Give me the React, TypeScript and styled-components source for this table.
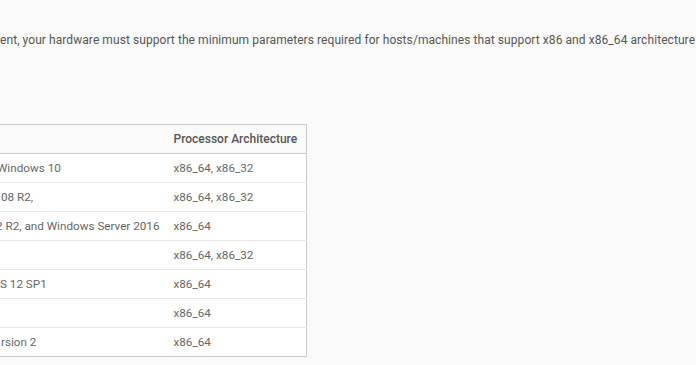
import { createGlobalStyle, styled } from "styled-components";

const GlobalStyle = createGlobalStyle`
  body {
    margin: 0;
    background-color: #fafafa;
    font-family: "Roboto", "Open Sans", sans-serif;
    color: #565656;
  }
`;

const Page = styled.main`
  width: 696px;
  height: 365px;
  overflow: hidden;
  display: flex;
  flex-direction: column;
`;

const Intro = styled.p`
  margin: 0;
  padding-top: 31px;
  font-size: 12px;
  letter-spacing: 0.07px;
  line-height: 18px;
  white-space: nowrap;
  color: #565656;
`;

const TableWrap = styled.div`
  margin-top: 75px;
  overflow: hidden;
`;

const Table = styled.table`
  border-collapse: collapse;
  table-layout: fixed;
  width: 308px;
  margin-left: -1px;
  background-color: #fff;
  border: 1px solid #ccc;
  font-size: 11.7px;
`;

const HeadCell = styled.th<{ $width?: number }>`
  box-sizing: border-box;
  width: ${({ $width }) => ($width ? `${$width}px` : "auto")};
  height: 29px;
  padding: 0 12px;
  text-align: left;
  font-weight: 500;
  font-size: 12px;
  color: #565656;
  background-color: #fafafa;
  border-bottom: 1px solid #ccc;
  white-space: nowrap;

  &:first-child {
    padding-left: 0;
  }
`;

const Row = styled.tr`
  & + & td {
    border-top: 1px solid #e8e8e8;
  }
`;

const Cell = styled.td<{ $indent?: number }>`
  box-sizing: border-box;
  height: 29px;
  padding: 0 12px;
  white-space: nowrap;
  overflow: hidden;
  color: #666;
  text-indent: ${({ $indent }) => $indent ?? 0}px;

  &:first-child {
    padding-left: 0;
  }
`;

const rows = [
  { os: "Windows 10", indent: -4, arch: "x86_64, x86_32" },
  { os: "08 R2,", indent: 1, arch: "x86_64, x86_32" },
  { os: "2 R2, and Windows Server 2016", indent: -4, arch: "x86_64" },
  { os: "", indent: 0, arch: "x86_64, x86_32" },
  { os: "S 12 SP1", indent: 0, arch: "x86_64" },
  { os: "", indent: 0, arch: "x86_64" },
  { os: "rsion 2", indent: 1, arch: "x86_64" },
];

const App = () => {
  return (
    <Page>
      <GlobalStyle />
      <Intro>
        ent, your hardware must support the minimum parameters required for
        hosts/machines that support x86 and x86_64 architecture
      </Intro>
      <TableWrap>
        <Table>
          <thead>
            <tr>
              <HeadCell $width={162}></HeadCell>
              <HeadCell>Processor Architecture</HeadCell>
            </tr>
          </thead>
          <tbody>
            {rows.map((r, i) => (
              <Row key={i}>
                <Cell $indent={r.indent}>{r.os}</Cell>
                <Cell>{r.arch}</Cell>
              </Row>
            ))}
          </tbody>
        </Table>
      </TableWrap>
    </Page>
  );
};

export default App;
